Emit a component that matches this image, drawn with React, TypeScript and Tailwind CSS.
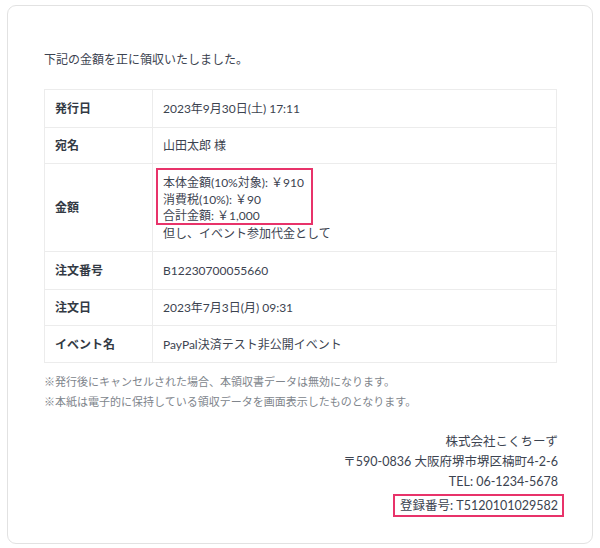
const rows = [
  { label: "発行日", value: "2023年9月30日(土) 17:11", h: "h-[38px]" },
  { label: "宛名", value: "山田太郎 様", h: "h-[36px]" },
];

const rows2 = [
  { label: "注文番号", value: "B12230700055660", h: "h-[38px]" },
  { label: "注文日", value: "2023年7月3日(月) 09:31", h: "h-[36px]" },
  { label: "イベント名", value: "PayPal決済テスト非公開イベント", h: "h-[37px]" },
];

function Row({ label, value, h }: { label: string; value: string; h: string }) {
  return (
    <tr className={`${h} border-b border-[#ececec]`}>
      <td className="w-[108px] border-r border-[#ececec] pl-[10px] py-0 font-bold text-[#333a44] leading-[17px]">
        {label}
      </td>
      <td className="pl-[10px] py-0 leading-[17px]">{value}</td>
    </tr>
  );
}

export default function App() {
  return (
    <div className="bg-white w-[600px] h-[548px] pt-[5px] pl-[7px] font-['Lato','Noto_Sans_CJK_JP',sans-serif] text-[12px] text-[#3c4350]">
      <div className="w-[586px] h-[539px] border border-[#e2e2e2] rounded-[9px] pl-[36px] pr-[35px] pt-[45px]">
        <p className="leading-[18px]">下記の金額を正に領収いたしました。</p>

        <table className="mt-[20px] w-[513px] border border-[#ececec] border-collapse">
          <tbody>
            {rows.map((r) => (
              <Row key={r.label} {...r} />
            ))}
            <tr className="h-[88px] border-b border-[#ececec]">
              <td className="w-[108px] border-r border-[#ececec] pl-[10px] font-bold text-[#333a44]">
                金額
              </td>
              <td className="pl-[3px] pt-[4px] pb-0 align-top">
                <div className="w-[157px] h-[57px] border-2 border-[#e8336a] pl-[5px] pt-[5px] leading-[16.5px]">
                  <div>本体金額(10%対象): ￥910</div>
                  <div>消費税(10%): ￥90</div>
                  <div>合計金額: ￥1,000</div>
                </div>
                <div className="pl-[7px] leading-[17px]">但し、イベント参加代金として</div>
              </td>
            </tr>
            {rows2.map((r) => (
              <Row key={r.label} {...r} />
            ))}
          </tbody>
        </table>

        <div className="mt-[9px] text-[11px] leading-[20px] text-[#80858c]">
          <p>※発行後にキャンセルされた場合、本領収書データは無効になります。</p>
          <p>※本紙は電子的に保持している領収データを画面表示したものとなります。</p>
        </div>

        <div className="mt-[20px] flex flex-col items-end w-[520px] text-[12.5px] leading-[20px]">
          <p className="pr-[6px]">株式会社こくちーず</p>
          <p className="pr-[6px]">〒590-0836 大阪府堺市堺区楠町4-2-6</p>
          <p className="pr-[6px]">TEL: 06-1234-5678</p>
          <p className="mt-[2px] border-2 border-[#e8336a] pl-[5px] pr-[4px] leading-[19px]">
            登録番号: T5120101029582
          </p>
        </div>
      </div>
    </div>
  );
}
